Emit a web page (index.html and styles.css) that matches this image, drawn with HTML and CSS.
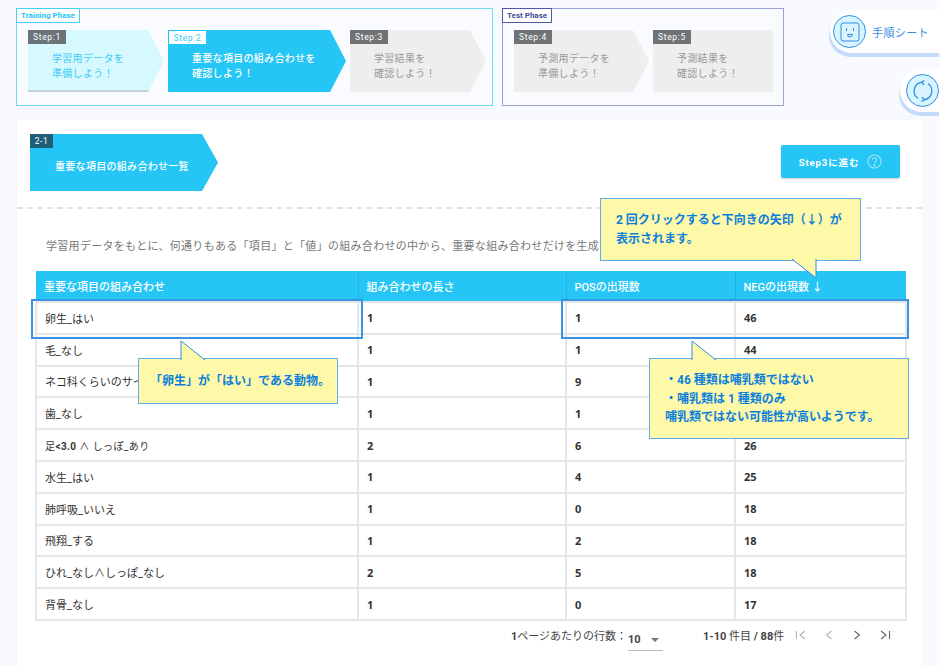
FILE: index.html
```html
<!DOCTYPE html>
<html lang="ja">
<head>
  <meta charset="UTF-8">
  <title>重要な項目の組み合わせ一覧</title>
  <link rel="stylesheet" href="styles.css">
</head>
<body>
  <div class="phases">
    <section class="phase phase-train">
      <div class="phase-label">Training Phase</div>
      <div class="step step-done step-w1"><span class="step-tag">Step:1</span><p>学習用データを<br>準備しよう！</p></div>
      <div class="step step-active step-w2"><span class="step-tag">Step:2</span><p>重要な項目の組み合わせを<br>確認しよう！</p></div>
      <div class="step step-w1"><span class="step-tag">Step:3</span><p>学習結果を<br>確認しよう！</p></div>
    </section>
    <section class="phase phase-test">
      <div class="phase-label">Test Phase</div>
      <div class="step step-w4"><span class="step-tag">Step:4</span><p>予測用データを<br>準備しよう！</p></div>
      <div class="step step-last"><span class="step-tag">Step:5</span><p>予測結果を<br>確認しよう！</p></div>
    </section>
  </div>

  <main class="card">
    <header class="card-head">
      <div class="section-title"><span class="section-tag">2-1</span><h2>重要な項目の組み合わせ一覧</h2></div>
      <button class="next-btn">Step3に進む
        <svg width="15" height="15" viewBox="0 0 16 16" fill="none" stroke="#a5e3fa" stroke-width="1.2"><circle cx="8" cy="8" r="7"/><path d="M5.8 6.2a2.2 2.2 0 1 1 3.4 1.9c-.8.5-1.2 1-1.2 1.9"/><circle cx="8" cy="12" r=".5"/></svg>
      </button>
    </header>

    <p class="intro">学習用データをもとに、何通りもある「項目」と「値」の組み合わせの中から、重要な組み合わせだけを生成し</p>

    <table class="rules">
      <colgroup><col class="col-a"><col class="col-b"><col class="col-c"><col class="col-d"></colgroup>
      <thead>
        <tr><th>重要な項目の組み合わせ</th><th>組み合わせの長さ</th><th>POSの出現数</th><th>NEGの出現数 ↓</th></tr>
      </thead>
      <tbody>
        <tr><td>卵生_はい</td><td>1</td><td>1</td><td>46</td></tr>
        <tr><td>毛_なし</td><td>1</td><td>1</td><td>44</td></tr>
        <tr><td>ネコ科くらいのサイ</td><td>1</td><td>9</td><td></td></tr>
        <tr><td>歯_なし</td><td>1</td><td>1</td><td></td></tr>
        <tr><td class="small">足<b>&lt;3.0</b> ∧ しっぽ_あり</td><td>2</td><td>6</td><td>26</td></tr>
        <tr><td>水生_はい</td><td>1</td><td>4</td><td>25</td></tr>
        <tr><td>肺呼吸_いいえ</td><td>1</td><td>0</td><td>18</td></tr>
        <tr><td>飛翔_する</td><td>1</td><td>2</td><td>18</td></tr>
        <tr><td>ひれ_なし∧しっぽ_なし</td><td>2</td><td>5</td><td>18</td></tr>
        <tr><td>背骨_なし</td><td>1</td><td>0</td><td>17</td></tr>
      </tbody>
    </table>

    <footer class="pager">
      <span class="pager-label"><b>1</b>ページあたりの行数：</span>
      <span class="pager-select">10<i class="caret"></i></span>
      <span class="pager-range"><b>1-10</b> 件目 <b>/ 88</b>件</span>
      <span class="pager-icons">
        <svg width="12" height="12" viewBox="0 0 12 12"><path d="M1.5 2v8M10 2 5 6l5 4" class="off"/></svg>
        <svg width="12" height="12" viewBox="0 0 12 12"><path d="M8.5 2 3.5 6l5 4" class="off"/></svg>
        <svg width="12" height="12" viewBox="0 0 12 12"><path d="M3.5 2l5 4-5 4" class="on"/></svg>
        <svg width="12" height="12" viewBox="0 0 12 12"><path d="M2 2l5 4-5 4M10.5 2v8" class="on"/></svg>
      </span>
    </footer>
  </main>

  <a class="float-btn float-sheet">
    <span class="float-icon">
      <svg width="20" height="20" viewBox="0 0 20 20" fill="none" stroke="#2f8de4"><rect x="1" y="1" width="18" height="18" rx="2"/><path d="M6.5 6v3M13.5 6v3"/><path d="M7.5 12.5h5a2.5 2.5 0 0 1-5 0z"/></svg>
    </span>
    手順シート
  </a>
  <a class="float-btn float-reload">
    <span class="float-icon">
      <svg width="22" height="22" viewBox="0 0 22 22" fill="none" stroke="#2f8de4" stroke-width="1.3"><path d="M6 18.500A9 9 0 0 1 10 2.200"/><path d="M16 3.500A9 9 0 0 1 12 19.800"/><path d="M12.500 .5 9.500 2.300l2.500 2.500M9.500 21.500l3-1.800-2.500-2.500"/></svg>
    </span>
  </a>

  <div class="mark mark-a"></div>
  <div class="mark mark-b"></div>

  <div class="note note-sort">2 回クリックすると下向きの矢印（↓）が<br>表示されます。
    <svg class="tail tail-down" width="26" height="20" viewBox="0 0 26 20"><path d="M0 0 24 19V0" /></svg>
  </div>
  <div class="note note-egg">「卵生」が「はい」である動物。
    <svg class="tail tail-up" width="26" height="20" viewBox="0 0 26 20"><path d="M1 20V1l24 19" /></svg>
  </div>
  <div class="note note-count">・46 種類は哺乳類ではない<br>・哺乳類は 1 種類のみ<br>哺乳類ではない可能性が高いようです。
    <svg class="tail tail-up" width="26" height="20" viewBox="0 0 26 20"><path d="M1 20V1l24 19" /></svg>
  </div>
</body>
</html>
```

FILE: styles.css
```css
* {
  box-sizing: border-box;
}

html,
body {
  height: 666px;
  overflow: hidden;
}

body {
  margin: 0;
  background: #f8faff;
  color: #333;
  font-family: Roboto, "Noto Sans CJK JP", sans-serif;
  position: relative;
}

.phases {
  display: flex;
  gap: 9px;
  padding: 8px 0 0 16px;
}

.phase {
  position: relative;
  display: flex;
  gap: 4px;
  height: 98px;
  padding: 21px 0 0 11px;
  border: 1px solid;
  background: #fafbff;
}

.phase-train {
  width: 477px;
  border-color: #6fdcf8;
}

.phase-test {
  width: 282px;
  border-color: #9aa3d6;
}

.phase-label {
  position: absolute;
  left: -1px;
  top: -1px;
  height: 15px;
  padding: 0 4px;
  border: 1px solid;
  background: #fff;
  font-size: 8px;
  font-weight: 700;
  line-height: 13px;
}

.phase-train .phase-label {
  color: #25c6f5;
  border-color: #45d0f7;
}

.phase-test .phase-label {
  color: #3f4c9c;
  border-color: #4d59a8;
}

.step {
  position: relative;
  height: 62px;
  background: #eeeeee;
  color: #999;
  clip-path: polygon(0 0, calc(100% - 16px) 0, 100% 50%, calc(100% - 16px) 100%, 0 100%);
}

.step p {
  margin: 0;
  padding: 22px 0 0 24px;
  font-size: 10px;
  line-height: 14.5px;
  letter-spacing: 0.3px;
}

.step-w1 {
  width: 136px;
}

.step-w2 {
  width: 178px;
}

.step-w4 {
  width: 135px;
}

.step-last {
  width: 120px;
  clip-path: none;
}

.step-done {
  background: #d6f9ff;
  color: #3ccbf5;
  border-bottom: 2px solid #c9d2d4;
}

.step-active {
  background: #25c6f5;
  color: #fff;
  font-weight: 500;
}

.step-tag {
  position: absolute;
  left: 0;
  top: 0;
  width: 38px;
  height: 14px;
  background: #6f7375;
  color: #fff;
  font-size: 8.5px;
  line-height: 14px;
  letter-spacing: 0.7px;
  text-align: center;
}

.step-done .step-tag {
  background: #6a7478;
}

.step-active .step-tag {
  left: 1px;
  top: 1px;
  width: 37px;
  height: 13px;
  background: #fff;
  color: #3ccbf5;
  font-weight: 400;
}

.card {
  width: 905px;
  height: 546px;
  margin: 14px 0 0 17px;
  background: #fff;
  box-shadow: 0 0 1px rgba(0, 0, 0, 0.08);
}

.card-head {
  display: flex;
  justify-content: space-between;
  height: 89px;
  padding: 14px 22px 0 13px;
  border-bottom: 2px dashed #e2e2e2;
}

.section-title {
  position: relative;
  width: 188px;
  height: 57px;
  background: #25c6f5;
  clip-path: polygon(0 0, 172px 0, 100% 50%, 172px 100%, 0 100%);
}

.section-title h2 {
  margin: 0;
  padding: 25px 0 0 25px;
  color: #fff;
  font-size: 10px;
  font-weight: 500;
  line-height: 15px;
  letter-spacing: 0.3px;
}

.section-tag {
  position: absolute;
  left: 0;
  top: 0;
  width: 23px;
  height: 14px;
  background: #1f5f78;
  color: #fff;
  font-size: 8.5px;
  line-height: 14px;
  letter-spacing: 0.6px;
  text-align: center;
}

.next-btn {
  display: flex;
  align-items: center;
  justify-content: center;
  gap: 8px;
  width: 119px;
  height: 33px;
  margin-top: 11px;
  border: 0;
  border-radius: 2px;
  background: #25c6f5;
  box-shadow: 0 1px 2px rgba(0, 0, 0, 0.2);
  color: #fff;
  font-family: inherit;
  font-size: 9.5px;
  font-weight: 700;
  letter-spacing: 0.9px;
}

.intro {
  margin: 0;
  padding: 29px 0 0 29px;
  height: 62px;
  color: #777;
  font-size: 11px;
  line-height: 18px;
  letter-spacing: 0.3px;
  white-space: nowrap;
}

.rules {
  width: 870px;
  margin-left: 18px;
  border-collapse: collapse;
  table-layout: fixed;
  font-size: 11px;
}

.col-a {
  width: 322px;
}

.col-b {
  width: 208px;
}

.col-c {
  width: 169px;
}

.col-d {
  width: 171px;
}

.rules th {
  height: 31px;
  padding: 0 8px;
  background: #25c6f5;
  border-right: 1px solid #1fb4e0;
  color: #fff;
  font-weight: 500;
  text-align: left;
}

.rules th:last-child {
  border-right: 0;
}

.rules td {
  height: 31.8px;
  padding: 0 8px;
  border: 2px solid #e6e6e6;
  font-family: "Noto Sans", "Noto Sans CJK JP", sans-serif;
  font-weight: 700;
  color: #333;
}

.rules td:first-child {
  font-family: Roboto, "Noto Sans CJK JP", sans-serif;
  font-weight: 400;
}

.rules td.small {
  font-size: 10px;
  letter-spacing: 0.4px;
}

.pager {
  display: flex;
  align-items: center;
  height: 30px;
  padding-left: 494px;
  font-size: 11px;
  color: #444;
}

.pager-label {
  width: 117px;
  margin-top: -2px;
  white-space: nowrap;
}

.pager-select {
  position: relative;
  width: 35px;
  height: 27px;
  padding-top: 8px;
  border-bottom: 1px solid #bbb;
  margin-top: 4px;
  font-weight: 700;
  line-height: 15px;
}

.caret {
  position: absolute;
  right: 4px;
  top: 14px;
  border: 4px solid transparent;
  border-top-color: #777;
  border-bottom: 0;
}

.pager-range {
  width: 90px;
  margin: -2px 0 0 40px;
  white-space: nowrap;
}

.pager-icons {
  display: flex;
  gap: 16px;
  margin: -2px 0 0 2px;
}

.pager-icons path {
  fill: none;
  stroke-width: 1.1;
}

.pager-icons .off {
  stroke: #b5b5b5;
}

.pager-icons .on {
  stroke: #666;
}

.float-btn {
  position: absolute;
  right: 0;
  display: flex;
  align-items: center;
  gap: 6px;
  background: #fff;
  border-radius: 22px 0 0 22px;
  box-shadow: -1px 4px 0 #c5dbfd;
  color: #3b8ce0;
  font-size: 11px;
  letter-spacing: 0.4px;
}

.float-sheet {
  top: 10px;
  width: 110px;
  height: 43px;
  padding-left: 3px;
}

.float-reload {
  top: 69px;
  width: 40px;
  height: 43px;
  padding-left: 6px;
}

.float-icon {
  display: flex;
  align-items: center;
  justify-content: center;
  flex: none;
  width: 33px;
  height: 33px;
  border: 1px solid #2f8de4;
  border-radius: 50%;
  background: #d8f5ff;
}

.mark {
  position: absolute;
  top: 299px;
  height: 40px;
  border: 2px solid #3a93e4;
}

.mark-a {
  left: 31px;
  width: 332px;
}

.mark-b {
  left: 561px;
  width: 348px;
}

.note {
  position: absolute;
  background: #fdf9a8;
  border: 1px solid #62ade4;
  color: #0c7fdc;
  font-size: 12px;
  font-weight: 700;
  line-height: 18.5px;
}

.note-sort {
  left: 600px;
  top: 198px;
  width: 261px;
  height: 63px;
  padding: 12px 15px;
}

.note-egg {
  left: 138px;
  top: 358px;
  width: 200px;
  height: 46px;
  padding: 13px 0 0 11px;
}

.note-count {
  left: 649px;
  top: 358px;
  width: 260px;
  height: 81px;
  padding: 12px 15px;
}

.tail {
  position: absolute;
  overflow: visible;
}

.tail path {
  fill: #fdf9a8;
  stroke: #2e8de3;
}

.tail-down {
  right: 42px;
  bottom: -19px;
}

.tail-up {
  top: -19px;
  left: 41px;
}
```
